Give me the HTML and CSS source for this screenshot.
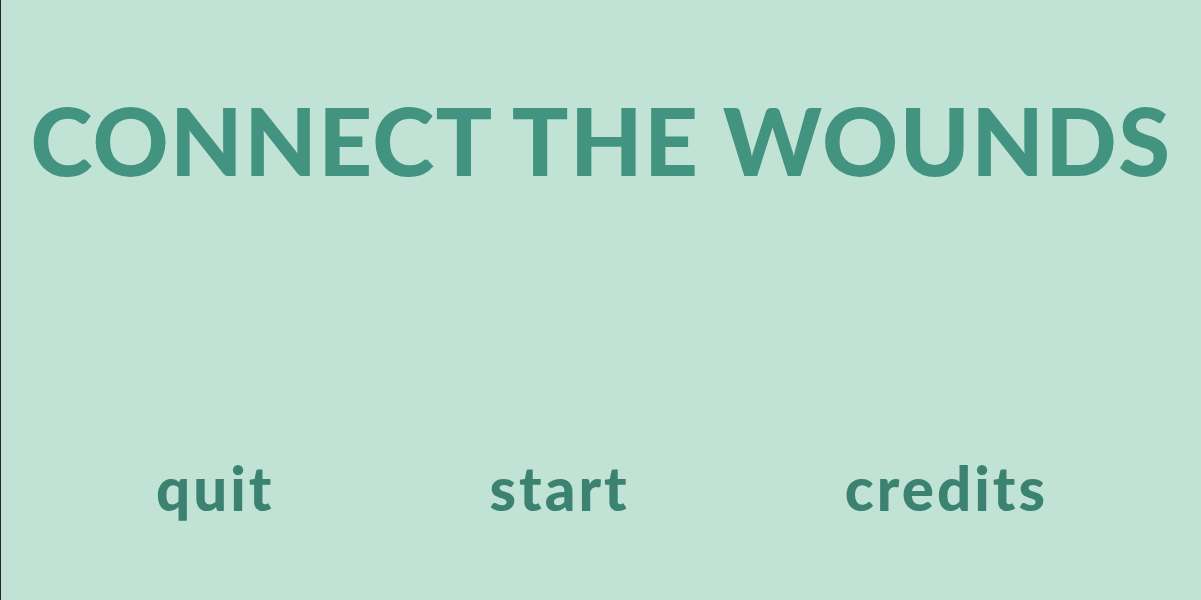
FILE: index.html
```html
<!DOCTYPE html>
<html>
<head>
<meta charset="utf-8">
<link rel="stylesheet" href="styles.css">
</head>
<body>
<main class="screen">
  <h1 class="title">CONNECT THE WOUNDS</h1>
  <nav class="menu">
    <span class="menu-item">quit</span>
    <span class="menu-item">start</span>
    <span class="menu-item">credits</span>
  </nav>
</main>
</body>
</html>
```
FILE: styles.css
```css
html, body {
  margin: 0;
  padding: 0;
  height: 100%;
}
body {
  background: #c1e3d6;
  border-left: 1px solid #1f2630;
  box-sizing: border-box;
  font-family: "Lato", "DejaVu Sans", sans-serif;
}
.screen {
  display: flex;
  flex-direction: column;
  height: 600px;
}
.title {
  margin: 0;
  padding-top: 85px;
  font-size: 94px;
  line-height: 110px;
  font-weight: 900;
  letter-spacing: 1.4px;
  color: #42937f;
  text-align: center;
}
.menu {
  display: flex;
  justify-content: space-between;
  padding: 0 153px 0 155px;
  margin-top: 258px;
}
.menu-item {
  font-size: 60px;
  line-height: 70px;
  font-weight: 900;
  letter-spacing: 3px;
  color: #3b8270;
}
```
